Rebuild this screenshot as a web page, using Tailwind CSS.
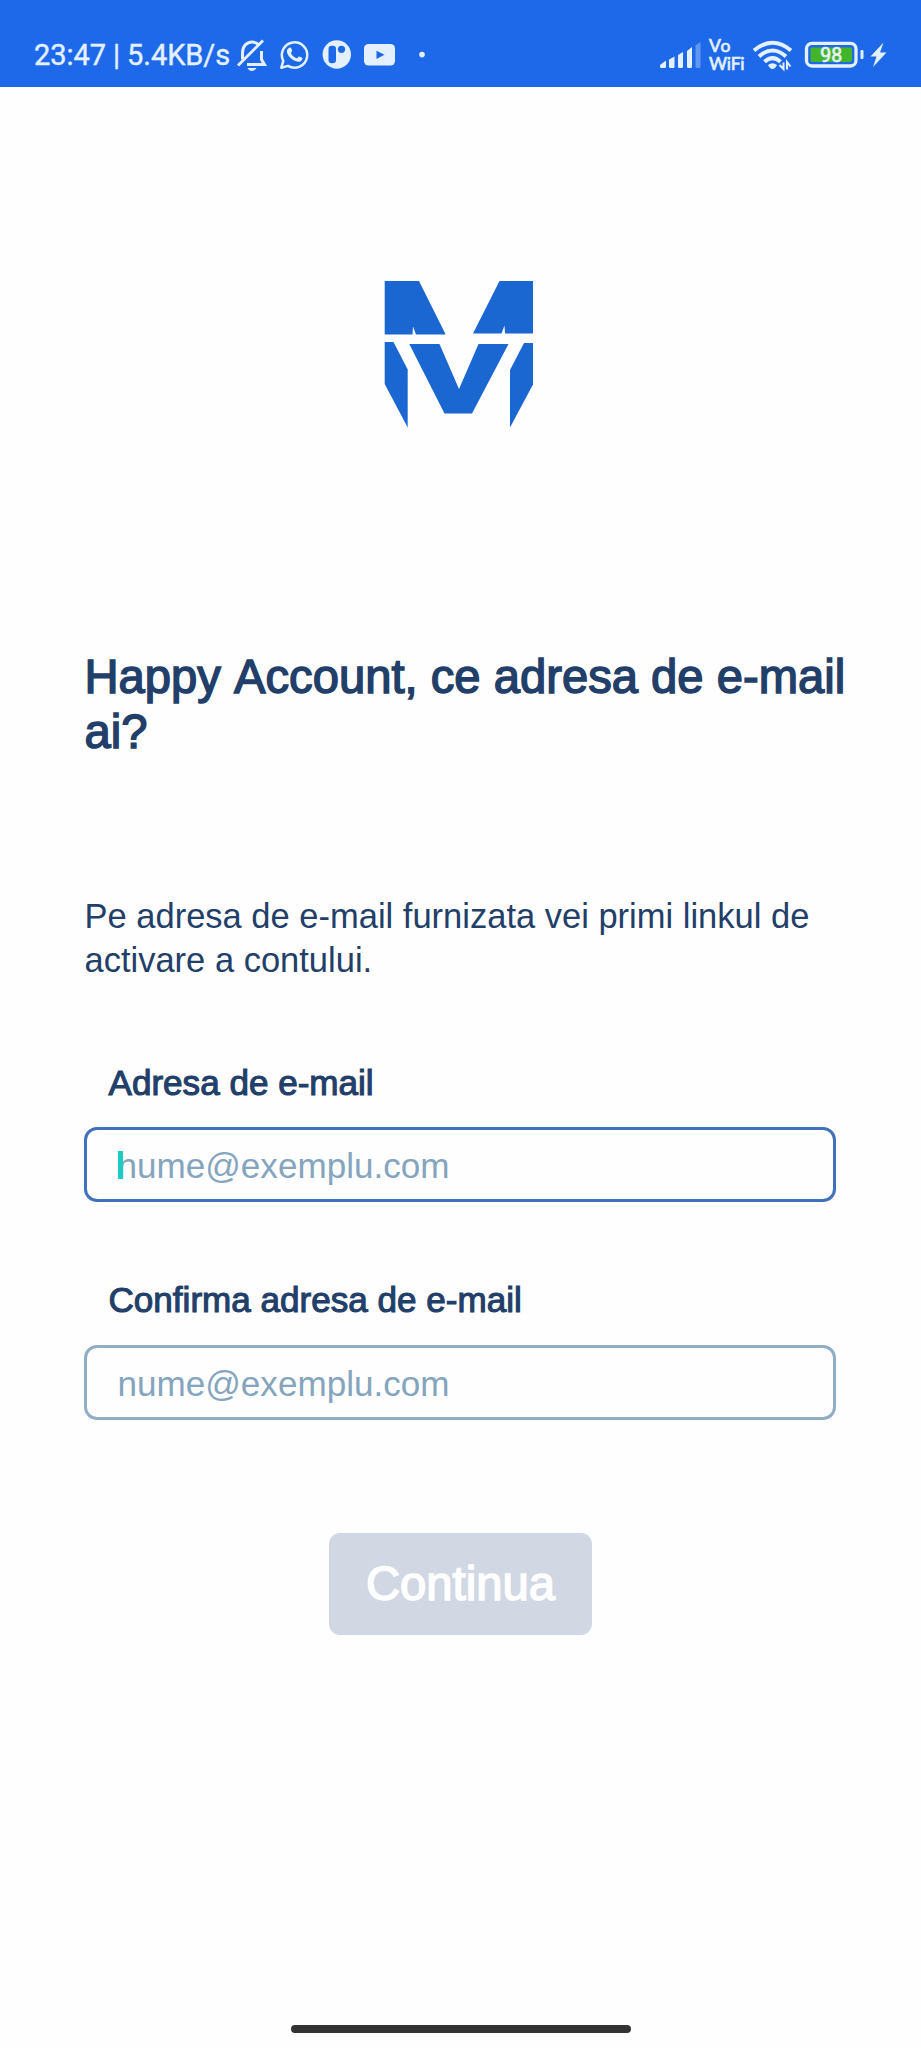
<!DOCTYPE html>
<html lang="ro">
<head>
<meta charset="utf-8">
<meta name="viewport" content="width=device-width, initial-scale=1">
<title>Happy Account</title>
<script src="https://cdn.jsdelivr.net/npm/@tailwindcss/browser@4"></script>
</head>
<body class="bg-[#fefefe] font-['Liberation_Sans',Arial,sans-serif] text-[#223f69] [font-kerning:none]">
<div class="flex h-[2048px] w-[921px] flex-col overflow-hidden">
  <header class="flex h-[87px] shrink-0 items-start justify-between bg-[#1d69ea] pr-[34px] pl-[34px] pt-[34px] text-[#e4f0fe]">
    <div class="flex h-[42px] items-center">
      <span class="w-[202px] whitespace-nowrap font-['Roboto',sans-serif] text-[29px] leading-[42px] tracking-[-0.07px] [-webkit-text-stroke:0.4px_currentColor]">23:47 | 5.4KB/s</span>
      <svg class="h-[40px] w-[210px]" viewBox="237 35 210 40" fill="none">
        <!-- muted bell -->
        <path d="M243.500 59.500V53C243.500 46.500 247.500 42 253 42C256 42 258.500 43.300 260 45.500M262.500 51V59.500L265.500 64.500H248" stroke="currentColor" stroke-width="3"/>
        <path d="M239 65.500L264 40.500" stroke="currentColor" stroke-width="2.800"/>
        <path d="M248.500 68H257.500Q256 71 253 71Q250 71 248.500 68Z" fill="currentColor"/>
        <!-- chat handset -->
        <path d="M282.300 67.700L284.300 60.900A12.700 12.700 0 1 1 289 65.900Z" stroke="currentColor" stroke-width="2.500" stroke-linejoin="round"/>
        <path d="M290.200 47.800C291.600 47.200 292 47.800 292.500 49C293.200 50.700 293.400 51 292.800 51.800C291.700 53 291.600 53 292.700 54.500C294 56.300 295.600 57.400 297.400 58.200C298.300 58.500 299.300 56.700 300 56.500C300.700 56.400 303.300 57.700 303.500 58.100C303.700 59 302.800 60.800 301.300 61.400C299.500 62.200 297.400 61.900 294.200 60.100C290.800 58 288.200 54.300 287.900 51.900C287.700 50.100 289 48.400 290.200 47.800Z" fill="currentColor"/>
        <!-- round app badge -->
        <circle cx="337.800" cy="54.500" r="14.200" fill="currentColor"/>
        <rect x="329.500" y="45.800" width="7.500" height="17.500" rx="3.300" fill="#1d69ea"/>
        <circle cx="342.500" cy="49.300" r="3.600" fill="#1d69ea"/>
        <!-- video -->
        <rect x="365" y="44" width="31" height="21.500" rx="4.500" fill="currentColor"/>
        <path d="M377.500 50.700L385.500 54.800L377.500 59Z" fill="#1d69ea"/>
        <circle cx="423" cy="54.600" r="2.800" fill="currentColor"/>
      </svg>
    </div>
    <div class="flex h-[42px] items-center">
      <svg class="h-[40px] w-[46px]" viewBox="660 35 46 40">
        <g fill="currentColor">
          <path d="M661 65L667 60.500V66.500Q667 68 665.500 68H662.500Q661 68 661 66.500Z"/>
          <path d="M670 59.500L675.500 56.500V66.500Q675.500 68 674 68H671.500Q670 68 670 66.500Z"/>
          <path d="M679 55L684 52V66.500Q684 68 682.500 68H680.500Q679 68 679 66.500Z"/>
          <path d="M688 51L693 47V66.500Q693 68 691.500 68H689.500Q688 68 688 66.500Z"/>
          <path opacity=".35" d="M696.500 45.500L701.500 42V66.500Q701.500 68 700 68H698Q696.500 68 696.500 66.500Z"/>
        </g>
      </svg>
      <span class="flex w-[46px] flex-col pl-[4px] font-['Lato',sans-serif] text-[17.500px] leading-[18px] tracking-[-0.300px] [-webkit-text-stroke:0.700px_currentColor]"><span>Vo</span><span>WiFi</span></span>
      <svg class="h-[40px] w-[136px]" viewBox="752 35 136 40" fill="none">
        <!-- wireless waves with traffic arrows -->
        <g stroke="currentColor" stroke-width="4">
          <path d="M755 50.500Q773.500 35 792 50.500"/>
          <path d="M760 56.500Q773.500 44.500 787 56.500"/>
          <path d="M765.500 61.800Q773.500 54.500 781.500 61.800"/>
        </g>
        <path d="M769 65Q773.500 61.500 778 65Q776 69 773.500 69Q771 69 769 65Z" fill="currentColor"/>
        <path d="M780.500 65L784.500 69V62.500M788 69.500V62L791.500 66.500" stroke="currentColor" stroke-width="2"/>
        <!-- battery -->
        <rect x="807.500" y="43.300" width="49.500" height="22.700" rx="5.500" stroke="currentColor" stroke-width="3.300"/>
        <rect x="811.500" y="47.500" width="41.500" height="14.500" rx="2" fill="#43b52b"/>
        <path d="M862 50.500H864V58.500H862Z" fill="currentColor" stroke="currentColor" stroke-width="1"/>
        <text x="832.300" y="61.800" text-anchor="middle" fill="currentColor" stroke="currentColor" stroke-width=".7" font-family="Roboto,sans-serif" font-size="19.500">98</text>
        <path d="M884.500 42.500L871.500 56.500H877.500L874 67L887.500 52.500H881Z" fill="currentColor"/>
      </svg>
    </div>
  </header>

  <main class="flex flex-1 flex-col pl-[84px]">
    <svg class="mt-[193px] ml-[300px] h-[148px] w-[150px]" viewBox="384 280 150 148" fill="#1b67d2">
      <path d="M384.700 281H419L445.700 334.500H416L413 326.500L412.500 334.500H384.700Z"/>
      <path d="M499.500 281H533V333.500H505L504.500 325.500L501.500 333.500H473Z"/>
      <path d="M384.700 342H393.500L407.700 369.500V427.500L384.700 384Z"/>
      <path d="M409.300 344H439.500L459 389L478.500 344H508.500L472 413.500H444.500Z"/>
      <path d="M533 343H524L510 370V427.500L533 384.500Z"/>
    </svg>

    <h1 class="mt-[222px] ml-[0.500px] whitespace-nowrap text-[47.200px] leading-[54.500px] [-webkit-text-stroke:1.500px_currentColor]">Happy Account, ce adresa de e-mail<br>ai?</h1>

    <p class="mt-[136px] ml-[0.500px] whitespace-nowrap text-[34.500px] leading-[43.500px]">Pe adresa de e-mail furnizata vei primi linkul de<br>activare a contului.</p>

    <label class="mt-[81px] ml-[24.500px] text-[35.100px] leading-[40px] [-webkit-text-stroke:1.100px_currentColor]">Adresa de e-mail</label>
    <div class="mt-[24px] flex h-[75px] w-[752px] items-center rounded-[13px] border-3 border-[#2c62b4]/90 pl-[30.500px] text-[35.100px] leading-[40px] text-[#84a5bd]">
      <div class="relative top-[1px]">nume@exemplu.com<span class="absolute top-[5px] left-0 h-[28px] w-[5px] bg-[#1dcbc2]"></span></div>
    </div>

    <label class="mt-[78px] ml-[24.500px] text-[35.100px] leading-[40px] [-webkit-text-stroke:1.100px_currentColor]">Confirma adresa de e-mail</label>
    <div class="mt-[25px] flex h-[75px] w-[752px] items-center rounded-[13px] border-3 border-[#84a5ba]/90 pl-[30.500px] text-[35.100px] leading-[40px] text-[#84a5bd]"><span class="pt-[2px]">nume@exemplu.com</span></div>

    <button class="mt-[113px] ml-[245px] h-[102px] w-[263px] rounded-[11px] bg-[#d1d8e4] text-[47.200px] text-white [-webkit-text-stroke:1.500px_currentColor]">Continua</button>
  </main>

  <div class="mb-[15px] h-[8px] w-[340px] self-center rounded-full bg-[#333333]"></div>
</div>
</body>
</html>
